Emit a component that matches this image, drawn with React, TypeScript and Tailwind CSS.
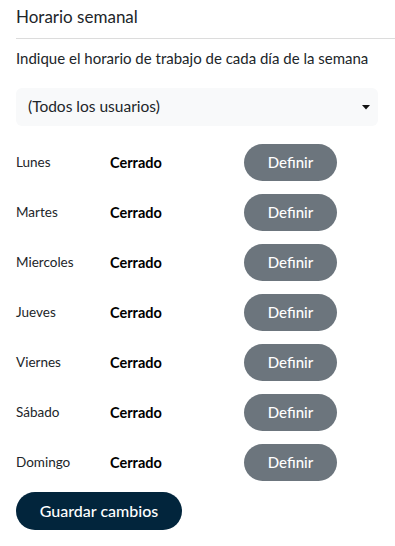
import React from "react";

const days = ["Lunes", "Martes", "Miercoles", "Jueves", "Viernes", "Sábado", "Domingo"];

export default function App() {
  return (
    <div
      className="w-[395px] h-[546px] bg-white pl-4 text-[#212529] overflow-hidden"
      style={{ fontFamily: "Lato, 'Noto Sans', sans-serif" }}
    >
      <div className="pt-[5px] text-[17px] leading-6">Horario semanal</div>
      <div className="mt-[9px] h-px bg-[#dcdcdc]" />
      <div className="mt-[9px] text-[15px] leading-5">
        Indique el horario de trabajo de cada día de la semana
      </div>
      <div className="mt-5 mr-[17px] h-[38px] rounded-md bg-[#f8f9fa] flex items-center justify-between pl-3 pr-[8px]">
        <span className="text-[15.5px]">(Todos los usuarios)</span>
        <svg width="8" height="5" viewBox="0 0 8 5">
          <path d="M0 0H8L4 4.5Z" fill="#111" />
        </svg>
      </div>
      <div className="mt-[18px] flex flex-col gap-[13px]">
        {days.map((d) => (
          <div key={d} className="flex items-center h-[37px]">
            <div className="w-[94px] text-[13.5px]">{d}</div>
            <div className="w-[134px] text-[14.5px] font-bold text-black">Cerrado</div>
            <button className="w-[93px] h-[37px] rounded-full bg-[#6c757d] text-white text-[15px] font-medium">
              Definir
            </button>
          </div>
        ))}
      </div>
      <button className="mt-[11px] w-[166px] h-[38px] rounded-full bg-[#02253c] text-white text-[16px] font-medium">
        Guardar cambios
      </button>
    </div>
  );
}
